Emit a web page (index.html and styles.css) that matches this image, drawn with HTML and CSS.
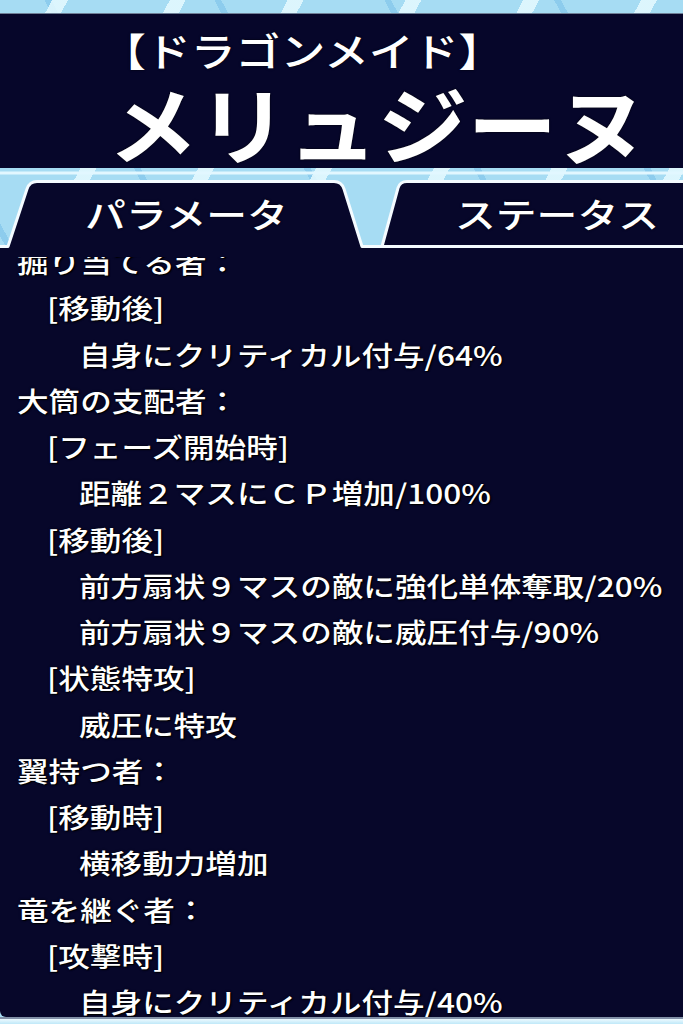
FILE: index.html
```html
<!DOCTYPE html>
<html lang="ja">
<head>
<meta charset="utf-8">
<title>メリュジーヌ</title>
<link rel="stylesheet" href="styles.css">
</head>
<body>
<div class="screen">
  <div class="top-strip"></div>
  <header class="title">
    <div class="title-sub"><span>【ドラゴンメイド】</span></div>
    <div class="title-name"><span>メリュジーヌ</span></div>
  </header>
  <nav class="tabs">
    <svg class="tabs-bg" width="683" height="89" viewBox="0 0 683 89">
      <line x1="0" y1="5" x2="683" y2="5" stroke="#e2f7ff" stroke-width="3"/>
      <rect x="0" y="79" width="683" height="10" fill="#07072a"/>
      <path d="M 8 79 L 27 21 Q 29.5 13.5 37 13.5 L 334 13.5 Q 341.5 13.5 344 21 L 362 79 Z" fill="#07072a"/>
      <path d="M 683 13.5 L 407 13.5 Q 400 13.5 398 20 L 382 78.5 L 683 78.5 Z" fill="#07072a"/>
      <path d="M -2 78.5 L 8 78.5 L 27 21 Q 29.5 13.5 37 13.5 L 334 13.5 Q 341.5 13.5 344 21 L 362 78.5 L 382 78.5 L 398 20 Q 400 13.5 407 13.5 L 690 13.5 M 382 78.5 L 690 78.5" fill="none" stroke="#f4fbff" stroke-width="3" stroke-linejoin="round"/>
    </svg>
    <div class="tab-labels">
      <div class="tab tab-active"><span>パラメータ</span></div>
      <div class="tab tab-other"><span>ステータス</span></div>
    </div>
  </nav>
  <main class="panel">
    <div class="list">
      <div class="l0"><span>掘り当てる者：</span></div>
      <div class="l1"><span>[移動後]</span></div>
      <div class="l2"><span>自身にクリティカル付与/64%</span></div>
      <div class="l0"><span>大筒の支配者：</span></div>
      <div class="l1"><span>[フェーズ開始時]</span></div>
      <div class="l2"><span>距離２マスにＣＰ増加/100%</span></div>
      <div class="l1"><span>[移動後]</span></div>
      <div class="l2"><span>前方扇状９マスの敵に強化単体奪取/20%</span></div>
      <div class="l2"><span>前方扇状９マスの敵に威圧付与/90%</span></div>
      <div class="l1"><span>[状態特攻]</span></div>
      <div class="l2"><span>威圧に特攻</span></div>
      <div class="l0"><span>翼持つ者：</span></div>
      <div class="l1"><span>[移動時]</span></div>
      <div class="l2"><span>横移動力増加</span></div>
      <div class="l0"><span>竜を継ぐ者：</span></div>
      <div class="l1"><span>[攻撃時]</span></div>
      <div class="l2"><span>自身にクリティカル付与/40%</span></div>
    </div>
  </main>
  <div class="bottom-strip"></div>
</div>
</body>
</html>
```

FILE: styles.css
```css
html, body {
  margin: 0;
  padding: 0;
}

body {
  width: 683px;
  height: 1024px;
  overflow: hidden;
  font-family: "Noto Sans CJK JP", "Noto Sans", sans-serif;
  color: #ffffff;
  background-color: #a6dcf3;
  background-image:
    repeating-linear-gradient(118deg, rgba(255,255,255,0) 0 46px, rgba(230,250,255,0.85) 46px 60px, rgba(255,255,255,0) 60px 104px),
    repeating-linear-gradient(62deg, rgba(110,185,230,0) 0 70px, rgba(110,185,230,0.45) 70px 76px, rgba(110,185,230,0) 76px 150px);
}

.screen {
  width: 683px;
  height: 1024px;
  display: flex;
  flex-direction: column;
}

.top-strip {
  height: 13px;
  flex: none;
}

.title {
  flex: none;
  height: 155px;
  box-sizing: border-box;
  border-top: 1px solid #6f7f96;
  background: #06062a;
  padding: 4px 0 0 108px;
  display: flex;
  flex-direction: column;
  text-shadow: 0 0 2px #000;
}

.title-sub {
  height: 62px;
  line-height: 62px;
  font-size: 39px;
  font-weight: 500;
  margin-left: -7px;
}

.title-sub span {
  display: inline-block;
  transform: scaleX(1.15);
  transform-origin: 0 50%;
}

.title-name {
  height: 84px;
  line-height: 84px;
  font-size: 84px;
  font-weight: 700;
}

.title-name span {
  display: inline-block;
  transform: scaleX(1.07);
  transform-origin: 0 50%;
}

.tabs {
  flex: none;
  position: relative;
  height: 89px;
}

.tabs-bg {
  position: absolute;
  left: 0;
  top: 0;
  display: block;
}

.tab-labels {
  position: relative;
  display: flex;
  padding-top: 14px;
  height: 64px;
}

.tab {
  height: 64px;
  line-height: 64px;
  font-size: 34px;
  font-weight: 500;
  text-shadow: 0 0 2px #000;
}

.tab span {
  display: inline-block;
  transform: scaleX(1.2);
}

.tab-active {
  margin-left: 28px;
  width: 317px;
  text-align: center;
}

.tab-active span {
  transform-origin: 50% 50%;
}

.tab-other {
  margin-left: 55px;
  width: 228px;
  padding-left: 55px;
}

.tab-other span {
  transform-origin: 0 50%;
}

.panel {
  flex: none;
  height: 760px;
  background: #07072a;
  overflow: hidden;
  border-bottom-left-radius: 6px;
}

.list {
  margin-top: -18px;
  font-size: 27px;
  line-height: 46.25px;
  font-weight: 500;
  text-shadow: 0 0 2px #000, 1px 1px 1px #000;
}

.list div {
  white-space: nowrap;
}

.list span {
  display: inline-block;
  transform: scaleX(1.17);
  transform-origin: 0 50%;
}

.l0 { padding-left: 17px; }
.l1 { padding-left: 47px; }
.l2 { padding-left: 79px; }

.bottom-strip {
  flex: 1;
  border-top: 2px solid #8291a8;
  background: linear-gradient(#eefaff, #bfe8f8);
}
```
